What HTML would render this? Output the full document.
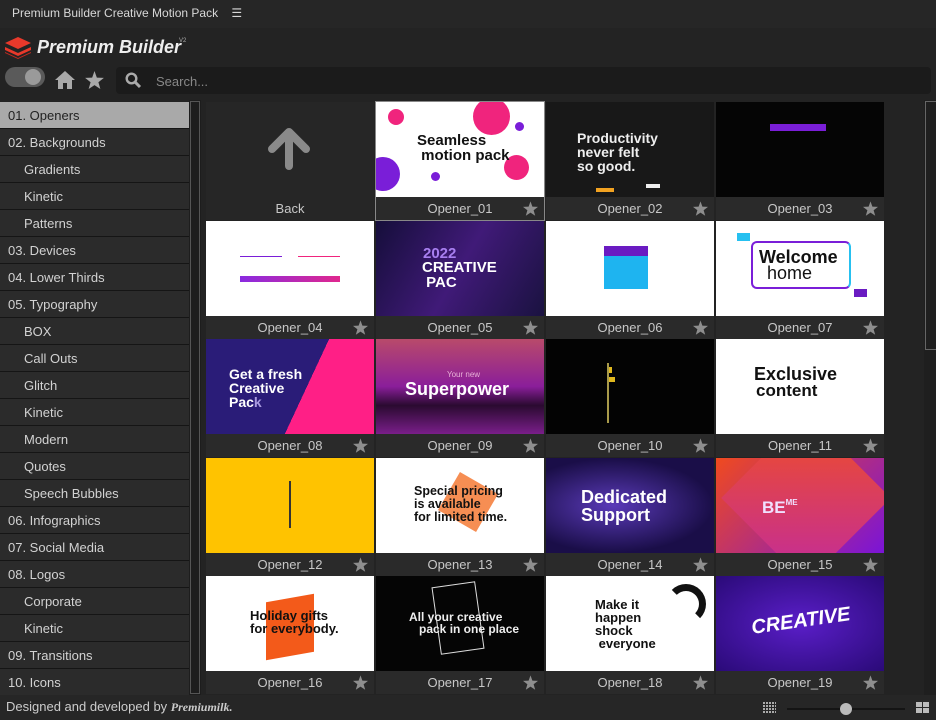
<!DOCTYPE html>
<html><head><meta charset="utf-8"><style>
*{margin:0;padding:0;box-sizing:border-box}
body{width:936px;height:720px;background:#232323;font-family:"Liberation Sans",Arial,sans-serif;position:relative;overflow:hidden;color:#ccc}
.a{position:absolute}
.side{position:absolute;left:0;top:102px;width:189px}
.it{height:27px;line-height:27px;border-bottom:1px solid #151515;background:#2b2b2b;color:#d2d2d2;font-size:13px;padding-left:8px}
.it.s{padding-left:24px}
.it.on{background:#a9a9a9;color:#222}
.c{position:absolute;width:168px;height:118px;background:#2a2a2a}
.t{position:absolute;left:0;top:0;width:168px;height:95px;overflow:hidden;font-family:"Liberation Sans",Arial,sans-serif;font-weight:bold}
.l{position:absolute;left:0;top:95px;width:168px;height:23px;text-align:center;line-height:24px;font-size:13px;color:#c8c8c8}
.st{position:absolute;right:6px;top:4px;width:15px;height:15px}
.tx{position:absolute;line-height:1}
</style></head><body>
<div class="a" style="left:0;top:0;width:936px;height:28px;background:#262626"></div>
<div class="a" style="left:12px;top:6px;font-size:12px;color:#d8d8d8">Premium Builder Creative Motion Pack&nbsp;&nbsp;&nbsp;&nbsp;☰</div>
<svg class="a" style="left:5px;top:37px" width="26" height="22" viewBox="0 0 26 22"><path d="M13 0L26 6 13 12 0 6Z" fill="#e8392b"/><path d="M0 10l13 6 13-6v3L13 19 0 13Z" fill="#e8392b"/><path d="M0 15l13 6 13-6v1L13 22 0 16Z" fill="#c52a1f"/></svg>
<div class="a" style="left:37px;top:37px;font-size:18px;font-weight:bold;font-style:italic;color:#eee">Premium Builder</div>
<div class="a" style="left:179px;top:38px;font-size:6px;color:#aaa">V2</div>
<div class="a" style="left:5px;top:67px;width:40px;height:20px;border-radius:10px;background:#5a5a5a"></div>
<div class="a" style="left:25px;top:69px;width:16px;height:16px;border-radius:8px;background:#9a9a9a"></div>
<svg class="a" style="left:55px;top:71px" width="20" height="18" viewBox="0 0 20 18"><path d="M10 0L20 9h-3v9h-5v-6H8v6H3V9H0Z" fill="#a9a9a9"/></svg>
<svg class="a" style="left:85px;top:71px" width="19" height="18" viewBox="0 0 24 23"><polygon points="12,0 15,8.5 24,8.8 17,14.3 19.5,23 12,18 4.5,23 7,14.3 0,8.8 9,8.5" fill="#a9a9a9"/></svg>
<div class="a" style="left:116px;top:67px;width:815px;height:27px;border-radius:4px;background:#1b1b1b"></div>
<svg class="a" style="left:125px;top:72px" width="17" height="17" viewBox="0 0 17 17"><circle cx="6.5" cy="6.5" r="4.8" fill="none" stroke="#aaa" stroke-width="2.4"/><path d="M10 10l5 5" stroke="#aaa" stroke-width="3"/></svg>
<div class="a" style="left:156px;top:74px;font-size:13px;color:#888">Search...</div>
<div class="side">
<div class="it on">01. Openers</div><div class="it">02. Backgrounds</div><div class="it s">Gradients</div><div class="it s">Kinetic</div><div class="it s">Patterns</div><div class="it">03. Devices</div><div class="it">04. Lower Thirds</div><div class="it">05. Typography</div><div class="it s">BOX</div><div class="it s">Call Outs</div><div class="it s">Glitch</div><div class="it s">Kinetic</div><div class="it s">Modern</div><div class="it s">Quotes</div><div class="it s">Speech Bubbles</div><div class="it">06. Infographics</div><div class="it">07. Social Media</div><div class="it">08. Logos</div><div class="it s">Corporate</div><div class="it s">Kinetic</div><div class="it">09. Transitions</div><div class="it">10. Icons</div>
</div>
<div class="a" style="left:189px;top:100px;width:12px;height:595px;background:#1d1d1d"></div>
<div class="a" style="left:190px;top:101px;width:10px;height:593px;border:1px solid #555"></div>
<div class="a" style="left:924px;top:100px;width:12px;height:595px;background:#1f1f1f"></div>
<div class="a" style="left:925px;top:101px;width:11px;height:249px;border:1px solid #666;border-right:none"></div>

<div class="c" style="left:206px;top:102px;background:#262626">
<svg class="a" style="left:62px;top:26px" width="42" height="42" viewBox="0 0 42 42"><path d="M21 4L4 21M21 4l17 17M21 4v34" stroke="#8a8a8a" stroke-width="8" stroke-linecap="round" fill="none"/></svg>
<div class="l" style="background:transparent">Back</div></div>

<div class="c" style="left:376px;top:102px;outline:1px solid #888"><div class="t" style="background:#fff">
<div class="a" style="left:12px;top:7px;width:16px;height:16px;border-radius:50%;background:#f0247d"></div>
<div class="a" style="left:97px;top:-4px;width:37px;height:37px;border-radius:50%;background:#f0247d"></div>
<div class="a" style="left:139px;top:20px;width:9px;height:9px;border-radius:50%;background:#7a1ed8"></div>
<div class="a" style="left:-10px;top:55px;width:34px;height:34px;border-radius:50%;background:#7a1ed8"></div>
<div class="a" style="left:55px;top:70px;width:9px;height:9px;border-radius:50%;background:#7a1ed8"></div>
<div class="a" style="left:128px;top:53px;width:25px;height:25px;border-radius:50%;background:#f0247d"></div>
<div class="tx" style="left:41px;top:31px;font-size:15px;color:#111">Seamless<br>&nbsp;motion pack</div></div><div class="l">Opener_01</div></div>

<div class="c" style="left:546px;top:102px"><div class="t" style="background:#181818">
<div class="tx" style="left:31px;top:29px;font-size:14px;color:#eee">Productivity<br>never felt<br>so good.</div>
<div class="a" style="left:50px;top:86px;width:18px;height:4px;background:#f2a221"></div>
<div class="a" style="left:100px;top:82px;width:14px;height:4px;background:#eee"></div></div><div class="l">Opener_02</div></div>

<div class="c" style="left:716px;top:102px"><div class="t" style="background:#050505">
<div class="a" style="left:54px;top:22px;width:56px;height:7px;background:#7a1ed8"></div></div><div class="l">Opener_03</div></div>

<div class="c" style="left:206px;top:221px"><div class="t" style="background:#fff">
<div class="a" style="left:34px;top:35px;width:42px;height:1px;background:#7a1ed8"></div>
<div class="a" style="left:92px;top:35px;width:42px;height:1px;background:#f0247d"></div>
<div class="a" style="left:34px;top:55px;width:100px;height:6px;background:linear-gradient(90deg,#8a2ae0,#e0288e)"></div></div><div class="l">Opener_04</div></div>

<div class="c" style="left:376px;top:221px"><div class="t" style="background:linear-gradient(120deg,#150e3a,#401a78 50%,#1a1240)">
<div class="tx" style="left:47px;top:25px;font-size:15px;color:#a87ff0">2022</div>
<div class="tx" style="left:46px;top:39px;font-size:15px;color:#fff">CREATIVE<br>&nbsp;PAC</div></div><div class="l">Opener_05</div></div>

<div class="c" style="left:546px;top:221px"><div class="t" style="background:#fff">
<div class="a" style="left:58px;top:25px;width:44px;height:10px;background:#6a1bc2"></div>
<div class="a" style="left:58px;top:35px;width:44px;height:33px;background:#1eb4f0"></div></div><div class="l">Opener_06</div></div>

<div class="c" style="left:716px;top:221px"><div class="t" style="background:#fff">
<div class="a" style="left:35px;top:20px;width:100px;height:48px;border:2px solid #7a1ed8;border-right-color:#26c0f0;border-radius:6px"></div>
<div class="a" style="left:21px;top:12px;width:13px;height:8px;background:#26c0f0"></div>
<div class="a" style="left:138px;top:68px;width:13px;height:8px;background:#6a1bc2"></div>
<div class="tx" style="left:43px;top:27px;font-size:18px;color:#111">Welcome</div>
<div class="tx" style="left:51px;top:43px;font-size:18px;color:#111;font-weight:normal">home</div></div><div class="l">Opener_07</div></div>

<div class="c" style="left:206px;top:339px"><div class="t" style="background:linear-gradient(115deg,#2a1c78 58%,#ff1f86 58%)">
<div class="tx" style="left:23px;top:28px;font-size:14px;color:#fff">Get a fresh<br>Creative<br>Pac<span style="color:#a99be0">k</span></div></div><div class="l">Opener_08</div></div>

<div class="c" style="left:376px;top:339px"><div class="t" style="background:linear-gradient(180deg,#b94a6a,#8a1e9a 50%,#2a0a30 70%,#7a1e8a)">
<div class="tx" style="left:71px;top:32px;font-size:8px;color:#e8b0d8;font-weight:normal">Your new</div>
<div class="tx" style="left:29px;top:41px;font-size:18px;color:#fff">Superpower</div></div><div class="l">Opener_09</div></div>

<div class="c" style="left:546px;top:339px"><div class="t" style="background:#030303">
<div class="a" style="left:61px;top:24px;width:2px;height:60px;background:#a89a4a"></div>
<div class="a" style="left:63px;top:28px;width:3px;height:6px;background:#e0b81e"></div>
<div class="a" style="left:63px;top:38px;width:6px;height:5px;background:#e0b81e"></div></div><div class="l">Opener_10</div></div>

<div class="c" style="left:716px;top:339px"><div class="t" style="background:#fff">
<div class="tx" style="left:38px;top:26px;font-size:18px;color:#111">Exclusive</div>
<div class="tx" style="left:40px;top:43px;font-size:17px;color:#111">content</div></div><div class="l">Opener_11</div></div>

<div class="c" style="left:206px;top:458px"><div class="t" style="background:#ffc300">
<div class="a" style="left:83px;top:23px;width:2px;height:47px;background:#333"></div></div><div class="l">Opener_12</div></div>

<div class="c" style="left:376px;top:458px"><div class="t" style="background:#fff">
<div class="a" style="left:70px;top:22px;width:44px;height:44px;background:#f57a35;opacity:.85;transform:rotate(30deg)"></div>
<div class="tx" style="left:38px;top:27px;font-size:12.5px;color:#111;line-height:1.05">Special pricing<br>is available<br>for limited time.</div></div><div class="l">Opener_13</div></div>

<div class="c" style="left:546px;top:458px"><div class="t" style="background:radial-gradient(ellipse at 40% 50%,#5a3ab8,#1a0e48 70%)">
<div class="tx" style="left:35px;top:30px;font-size:18px;color:#fff">Dedicated<br>Support</div></div><div class="l">Opener_14</div></div>

<div class="c" style="left:716px;top:458px"><div class="t" style="background:linear-gradient(135deg,#f04a1e,#7a14d8)">
<div class="a" style="left:30px;top:-20px;width:120px;height:120px;background:linear-gradient(135deg,#f25020,#c02aa0);transform:rotate(45deg)"></div>
<div class="tx" style="left:46px;top:41px;font-size:17px;color:#f0e0ff">BE<span style="font-size:8px;vertical-align:top">ME</span></div></div><div class="l">Opener_15</div></div>

<div class="c" style="left:206px;top:576px"><div class="t" style="background:#fff">
<div class="a" style="left:60px;top:22px;width:48px;height:58px;background:#f35a1a;transform:skewY(-10deg)"></div>
<div class="tx" style="left:44px;top:33px;font-size:13px;color:#111">Holiday gifts<br>for everybody.</div></div><div class="l">Opener_16</div></div>

<div class="c" style="left:376px;top:576px"><div class="t" style="background:#050505">
<div class="a" style="left:60px;top:8px;width:44px;height:68px;border:1px solid #ddd;transform:rotate(-8deg)"></div>
<div class="tx" style="left:33px;top:35px;font-size:12px;color:#eee">All your creative<br>&nbsp;&nbsp;&nbsp;pack in one place</div></div><div class="l">Opener_17</div></div>

<div class="c" style="left:546px;top:576px"><div class="t" style="background:#fff">
<div class="a" style="left:120px;top:8px;width:40px;height:40px;border-radius:50%;border:7px solid #111;border-bottom-color:transparent;border-left-color:transparent"></div>
<div class="tx" style="left:49px;top:22px;font-size:13px;color:#111">Make it<br>happen<br>shock<br>&nbsp;everyone</div></div><div class="l">Opener_18</div></div>

<div class="c" style="left:716px;top:576px"><div class="t" style="background:radial-gradient(#5a1ec8,#2a0a78)">
<div class="tx" style="left:35px;top:35px;font-size:20px;color:#fff;transform:rotate(-8deg);font-style:italic">CREATIVE</div></div><div class="l">Opener_19</div></div>

<div class="a" style="left:0;top:695px;width:936px;height:25px;background:#262626"></div>
<div class="a" style="left:6px;top:699px;font-size:13px;color:#ccc">Designed and developed by <i style="font-family:'Liberation Serif',serif;font-weight:bold;font-size:12px">Premiumilk.</i></div>
<div class="a" style="left:763px;top:702px;width:13px;height:11px;background:repeating-linear-gradient(90deg,#aaa 0 2px,transparent 2px 3px),#262626;-webkit-mask:repeating-linear-gradient(0deg,#000 0 2px,transparent 2px 3px)"></div>
<div class="a" style="left:787px;top:708px;width:118px;height:2px;background:#141414"></div>
<div class="a" style="left:840px;top:703px;width:12px;height:12px;border-radius:6px;background:#bbb"></div>
<div class="a" style="left:916px;top:702px;width:6px;height:5px;background:#bbb"></div><div class="a" style="left:923px;top:702px;width:6px;height:5px;background:#bbb"></div>
<div class="a" style="left:916px;top:708px;width:6px;height:5px;background:#bbb"></div><div class="a" style="left:923px;top:708px;width:6px;height:5px;background:#bbb"></div>

<script>
document.querySelectorAll('.c .l').forEach(function(l){if(l.textContent!=='Back'){l.insertAdjacentHTML('beforeend','<svg class="st" viewBox="0 0 24 23"><polygon points="12,0 15,8.5 24,8.8 17,14.3 19.5,23 12,18 4.5,23 7,14.3 0,8.8 9,8.5" fill="#8e8e8e"/></svg>')}});
</script>
</body></html>
